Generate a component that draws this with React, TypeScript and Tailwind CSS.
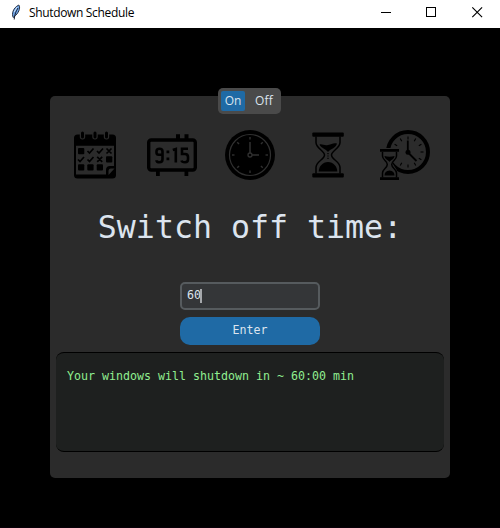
import React from 'react';

const PANEL = '#2b2b2b';

function Feather() {
  return (
    <svg className="h-4 w-4 shrink-0" viewBox="0 0 16 16" aria-hidden="true">
      <path d="M5.200 13.500C3.500 10 4.800 4 10.800 1c1.500 1.800 1 6.500-3.300 10.500z" fill="#6fa5e6" stroke="#1a2334" strokeWidth="0.900" />
      <path d="M10 4C8 7 6.800 10 6.200 15.500" fill="none" stroke="#0b1020" strokeWidth="0.900" />
      <path d="M9.200 3L6.200 8" stroke="#cfe3fb" strokeWidth="1" />
    </svg>
  );
}

function WindowButtons() {
  return (
    <div className="flex h-full items-center">
      <svg className="h-6 w-[138px]" viewBox="0 0 138 24" fill="none" stroke="#000" aria-hidden="true">
        <path d="M19 12.500h10" shapeRendering="crispEdges" />
        <path d="M64.500 7.500h9v9h-9z" shapeRendering="crispEdges" />
        <path d="M110.300 7.300l9.800 9.800M120.100 7.300l-9.800 9.800" strokeWidth="1.150" />
      </svg>
    </div>
  );
}

function CalendarIcon() {
  return (
    <svg className="h-[50px] w-[50px]" viewBox="0 0 50 50" fill="none" aria-hidden="true">
      <rect x="4" y="4.500" width="42" height="44" rx="3.500" fill="#000" />
      <path d="M6 15.800h38v20.200h-4q-4 0-4 4v4.500h-30z" fill={PANEL} />
      {[12.5, 25, 36.5].map((x) => (
        <g key={x}>
          <rect x={x - 2.7} y="1" width="5.400" height="8.500" rx="2.700" fill={PANEL} />
          <rect x={x - 1.5} y="1.500" width="3" height="7" rx="1.500" fill="#000" />
        </g>
      ))}
      <g fill="#000">
        <rect x="8" y="18" width="6.300" height="6.300" rx="1" />
        <rect x="36" y="26.300" width="6.300" height="6.300" rx="1" />
        <rect x="8" y="34.300" width="6.300" height="6.300" rx="1" />
        <rect x="17.300" y="34.300" width="6.300" height="6.300" rx="1" />
        <rect x="26.700" y="34.300" width="6.300" height="6.300" rx="1" />
      </g>
      <path
        d="M17.500 21l2 2 4-4.500M27 21l2 2 4-4.500M8 29.500l2 2 4-4.500M17.500 29.500l2 2 4-4.500M36.500 18.500l5 5m0-5l-5 5M27.200 26.800l5 5m0-5l-5 5"
        stroke="#000"
        strokeWidth="1.700"
      />
      <path d="M38.500 45v-4q0-2.500 2.500-2.500h3.500z" fill={PANEL} />
    </svg>
  );
}

function DigitalClockIcon() {
  return (
    <svg className="h-[50px] w-[50px]" viewBox="0 0 50 50" fill="none" aria-hidden="true">
      <path d="M29 9V4.300h4v4.700M37.500 9V4.300h4v4.700M9 40h3.800v6H9zM37.500 40h3.800v6h-3.800z" fill="#000" />
      <rect x="1.700" y="10" width="46.600" height="30" rx="2.500" stroke="#000" strokeWidth="3.400" />
      <g stroke="#000" strokeWidth="2.600">
        <path d="M15.500 24.800h-3.800q-2.200 0-2.200-2.300v-1q0-2.700 3-2.700t3 2.700v7.800q0 3-3 3t-3-2" />
        <path d="M25.800 20l3-1v13.500" />
        <path d="M41 18.800h-6v5.200h3q3 0 3 3v2.300q0 3-3 3t-3.500-1.800" />
      </g>
      <path d="M19.500 20.500h2.800v2.800h-2.800zM19.500 27.500h2.800v2.800h-2.800z" fill="#000" />
    </svg>
  );
}

function ClockIcon() {
  return (
    <svg className="h-[50px] w-[50px]" viewBox="0 0 50 50" fill="none" aria-hidden="true">
      <circle cx="25" cy="25" r="25" fill="#000" />
      <g stroke="#303030">
        <circle cx="25" cy="25" r="20.500" strokeWidth="1.200" />
        <circle cx="25" cy="25" r="2" strokeWidth="1.300" />
        <path d="M25 12v11M27 25h7" strokeWidth="1.500" />
        {[0, 45, 90, 135, 180, 225, 270, 315].map((a) => (
          <path key={a} d="M25 7v2.500" strokeWidth="1.400" transform={`rotate(${a} 25 25)`} />
        ))}
      </g>
    </svg>
  );
}

function HourglassIcon() {
  return (
    <svg className="h-[50px] w-[50px]" viewBox="0 0 50 50" fill="none" aria-hidden="true">
      <rect x="9.300" y="2.500" width="31.500" height="4.200" rx="1" fill="#000" />
      <rect x="9.300" y="43.300" width="31.500" height="4.200" rx="1" fill="#000" />
      <path
        d="M13 6.500v6c0 6 8.500 8 8.500 12.500s-8.500 6.500-8.500 12.500v6M37 6.500v6c0 6-8.500 8-8.500 12.500s8.500 6.500 8.500 12.500v6"
        stroke="#000"
        strokeWidth="1.500"
      />
      <path d="M16.500 14.500c3-.8 5 1.500 8.500 .5 4-.8 5-2.500 9-1.500-1 4.500-6 5-9 8.500-3-3.500-7-4-8.500-7.500z" fill="#000" />
      <path d="M15.700 41.500c0-5 4-9.500 9.300-9.500s9.300 4.500 9.300 9.500z" fill="#000" />
      <path d="M25 23v7" stroke="#000" strokeWidth="1.300" strokeDasharray="1.200 1.200" />
    </svg>
  );
}

function TimeIcon() {
  return (
    <svg className="h-[50px] w-[50px]" viewBox="0 0 50 50" fill="none" aria-hidden="true">
      <circle cx="28" cy="22" r="20" stroke="#000" strokeWidth="4" />
      {[0, 30, 60, 90, 120, 150, 180, 210, 270, 300, 330].map((a) => (
        <path key={a} d="M28 6.500v3" stroke="#000" strokeWidth="1.100" transform={`rotate(${a} 28 22)`} />
      ))}
      <path d="M27.800 10.500v10M29 23.500l7.500 7.500" stroke="#000" strokeWidth="1.800" />
      <circle cx="28" cy="22.300" r="2.500" fill="#000" />
      <path d="M-1 18h20.500v3.500l-3 6-4 6 4 6 2.500 10H-1z" fill={PANEL} />
      <path d="M0 19h19v2.800H0zM0 47.200h19v2.800H0z" fill="#000" />
      <path
        d="M2.500 22v4c0 4 4.800 5 4.800 8.500S2.500 39 2.500 43v4.500M16.500 22v4c0 4-4.800 5-4.800 8.500s4.800 4.500 4.800 8.500v4.500"
        stroke="#000"
        strokeWidth="1.500"
      />
      <path d="M4.500 26q5 1.500 10 0c0 3-4 4-5 6-1-2-5-3-5-6zM4.500 45.500q0-4.500 5-5 5 .5 5 5z" fill="#000" />
    </svg>
  );
}

export default function App() {
  return (
    <div className="flex h-[528px] w-[500px] flex-col overflow-hidden bg-black">
      <header className="flex h-7 shrink-0 items-center justify-between bg-white pb-1 pl-2">
        <div className="flex items-center gap-[5px]">
          <Feather />
          <span className="whitespace-nowrap pt-0.5 font-['Open_Sans','Noto_Sans',sans-serif] text-[12px] leading-4 tracking-[-0.340px] text-black">
            Shutdown Schedule
          </span>
        </div>
        <WindowButtons />
      </header>

      <main className="relative mx-[50px] mt-[68px] flex h-[382px] flex-col rounded-[5px] bg-[#2b2b2b] font-['DejaVu_Sans_Mono',monospace]">
        <div className="absolute -top-2 left-[168px] flex h-[26px] w-[63px] rounded-[5px] bg-[#4a4a4a] p-[3px] font-['Open_Sans','Noto_Sans',sans-serif] text-[12px] leading-5 text-[#dce4ee]">
          <button className="w-6 rounded-[2px] bg-[#1f6aa5] text-center">On</button>
          <button className="flex-1 pl-[5px] text-center tracking-[0.200px]">Off</button>
        </div>

        <div className="flex pl-5 pt-[34px]">
          <CalendarIcon />
          <div className="ml-[27px]"><DigitalClockIcon /></div>
          <div className="ml-7"><ClockIcon /></div>
          <div className="ml-7"><HourglassIcon /></div>
          <div className="ml-[27px]"><TimeIcon /></div>
        </div>

        <h1 className="mt-[27px] h-10 whitespace-nowrap text-center text-[31.600px] leading-10 text-[#dce4ee]">
          Switch off time:
        </h1>

        <div className="mx-auto mt-[35px] flex h-7 w-[140px] items-center rounded-[5px] border-2 border-[#565b5e] bg-[#343638] pl-[5px] text-[11.630px] text-[#dce4ee]">
          <span>60</span>
          <span className="-ml-px h-3.5 w-0.5 bg-[#a5a8ab]" />
        </div>
        <button className="mx-auto mt-[7px] h-7 w-[140px] rounded-[10px] bg-[#1f6aa5] pb-0.5 text-center text-[11.630px] leading-[26px] text-[#dce4ee]">
          Enter
        </button>

        <div className="mx-1.5 mt-[7px] h-[100px] overflow-hidden rounded-[8px] border-y border-black bg-[#1e201f] pl-[11px] pt-3.5 text-[11.630px] leading-[18px] text-[#90ee90]">
          Your windows will shutdown in ~ 60:00 min
        </div>
      </main>
      <div className="mt-auto h-px bg-[#080008]" />
    </div>
  );
}
